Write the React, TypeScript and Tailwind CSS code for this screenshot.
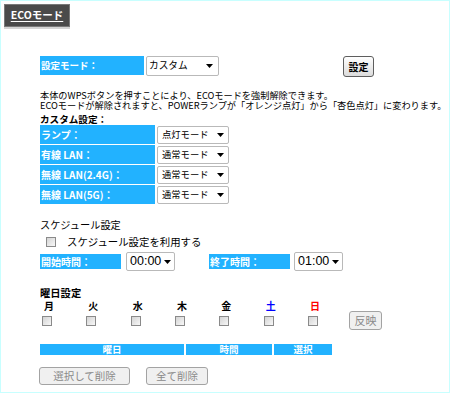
import React from "react";

const Arrow = ({ w = 7 }: { w?: number }) => (
  <svg width={w} height={4} viewBox="0 0 7 4" className="shrink-0">
    <path d="M0 0H7L3.5 4Z" fill="#000" />
  </svg>
);

function Select({
  className,
  text,
  textClass,
}: {
  className: string;
  text: string;
  textClass: string;
}) {
  return (
    <div
      className={`flex items-center justify-between bg-white border border-[#b9b9b9] rounded-[2px] ${className}`}
    >
      <span className={`whitespace-nowrap ${textClass}`}>{text}</span>
      <Arrow />
    </div>
  );
}

const Check = () => (
  <div className="w-[10px] h-[10px] border border-[#8a8a8a] bg-linear-to-br from-[#d4d4d4] to-[#f8f8f8] shrink-0" />
);

const days: { d: string; c: string; w: string }[] = [
  { d: "月", c: "text-black", w: "w-[44.33px]" },
  { d: "火", c: "text-black", w: "w-[44.33px]" },
  { d: "水", c: "text-black", w: "w-[44.33px]" },
  { d: "木", c: "text-black", w: "w-[44.33px]" },
  { d: "金", c: "text-black", w: "w-[44.33px]" },
  { d: "土", c: "text-[#0000ff]", w: "w-[44.33px]" },
  { d: "日", c: "text-[#ff0000]", w: "w-[41px]" },
];

const rows = ["ランプ：", "有線 LAN：", "無線 LAN(2.4G)：", "無線 LAN(5G)："];
const rowVals = ["点灯モード", "通常モード", "通常モード", "通常モード"];

export default function App() {
  return (
    <div className="w-[450px] h-[393px] border border-[#c8ffff] bg-white text-black overflow-hidden font-['Noto_Sans_CJK_JP','Noto_Sans',sans-serif]">
      {/* Header tab */}
      <div className="ml-[3px] mt-[3px] w-[66px]">
        <div className="h-[23px] bg-[#4a4a4a] border border-[#787878] flex items-center justify-center">
          <span className="text-white font-bold text-[10.5px] leading-none underline underline-offset-2">
            ECOモード
          </span>
        </div>
        <div className="h-[2px] bg-[#d4d4d4]" />
      </div>

      <div className="pl-[39px]">
        {/* mode row */}
        <div className="mt-[27px] flex items-start">
          <div className="w-[104px] h-[19px] bg-[#22b2ff] text-white font-bold text-[9.5px] leading-[19px] pl-[1px] whitespace-nowrap">
            設定モード：
          </div>
          <Select
            className="ml-[2px] w-[73px] h-[20px] pl-[2px] pr-[5px]"
            text="カスタム"
            textClass="text-[9.7px] leading-none"
          />
          <div className="ml-[124px] w-[31px] h-[21px] border border-[#5e5e5e] rounded-[3px] bg-linear-to-b from-[#ffffff] to-[#dcdcdc] flex items-center justify-center text-[10px] font-bold leading-none">
            設定
          </div>
        </div>

        {/* description */}
        <div className="mt-[13px] text-[9.2px] leading-[10px] whitespace-nowrap">
          <div>本体のWPSボタンを押すことにより、ECOモードを強制解除できます。</div>
          <div>ECOモードが解除されますと、POWERランプが「オレンジ点灯」から「杏色点灯」に変わります。</div>
        </div>
        <div className="mt-[4px] text-[9.6px] leading-[10px] font-bold">カスタム設定：</div>

        {/* custom rows */}
        <div className="mt-[1px] flex flex-col gap-[1px]">
          {rows.map((r, i) => (
            <div key={r} className="flex items-center h-[19px]">
              <div className="w-[115px] h-[19px] bg-[#22b2ff] text-white font-bold text-[10px] leading-[19px] pl-[1px] whitespace-nowrap">
                {r}
              </div>
              <Select
                className="ml-[2px] w-[72px] h-[18px] pl-[4px] pr-[4px]"
                text={rowVals[i]}
                textClass="text-[9.3px] leading-none"
              />
            </div>
          ))}
        </div>

        {/* schedule */}
        <div className="mt-[15px] text-[10.2px] leading-[11px]">スケジュール設定</div>
        <div className="mt-[6px] h-[12px] flex items-center pl-[6px]">
          <Check />
          <span className="ml-[11px] text-[10.4px] leading-none">スケジュール設定を利用する</span>
        </div>

        <div className="mt-[4px] h-[19px] flex items-center">
          <div className="w-[81px] h-[15px] bg-[#22b2ff] text-white font-bold text-[10px] leading-[15px] pl-[1px] whitespace-nowrap">
            開始時間：
          </div>
          <Select
            className="ml-[5px] w-[49px] h-[19px] pl-[3px] pr-[3px]"
            text="00:00"
            textClass="text-[12.5px] leading-none font-['Liberation_Sans',Arial,sans-serif]"
          />
          <div className="ml-[34px] w-[81px] h-[15px] bg-[#22b2ff] text-white font-bold text-[10px] leading-[15px] pl-[1px] whitespace-nowrap">
            終了時間：
          </div>
          <Select
            className="ml-[4px] w-[49px] h-[19px] pl-[3px] pr-[3px]"
            text="01:00"
            textClass="text-[12.5px] leading-none font-['Liberation_Sans',Arial,sans-serif]"
          />
        </div>

        {/* days */}
        <div className="mt-[16px] text-[10.3px] leading-[11px] font-bold">曜日設定</div>
        <div className="mt-[3px] flex items-start">
          {days.map((d) => (
            <div key={d.d} className={`${d.w} pl-[2px] flex flex-col`}>
              <div className={`h-[10px] text-[10px] leading-[10px] font-bold pl-[2px] ${d.c}`}>{d.d}</div>
              <div className="mt-[5px]">
                <Check />
              </div>
            </div>
          ))}
          <div className="ml-[2px] mt-[10px] w-[33px] h-[19px] border border-[#a3a3a3] rounded-[3px] bg-[#f0f0f0] flex items-center justify-center text-[11px] leading-none text-[#8a8a8a]">
            反映
          </div>
        </div>

        {/* table header */}
        <div className="mt-[14px] flex gap-[2px] h-[11px] text-white font-bold text-[9.5px] leading-[11px]">
          <div className="w-[144px] bg-[#22b2ff] text-center">曜日</div>
          <div className="w-[86px] bg-[#22b2ff] text-center">時間</div>
          <div className="w-[58px] bg-[#22b2ff] text-center">選択</div>
        </div>

        {/* buttons */}
        <div className="mt-[12px] -ml-[1px] flex gap-[16px]">
          <div className="w-[91px] h-[18px] border border-[#a3a3a3] rounded-[3px] bg-[#f0f0f0] flex items-center justify-center text-[10.5px] leading-none text-[#8a8a8a]">
            選択して削除
          </div>
          <div className="w-[62px] h-[18px] border border-[#a3a3a3] rounded-[3px] bg-[#f0f0f0] flex items-center justify-center text-[10.5px] leading-none text-[#8a8a8a]">
            全て削除
          </div>
        </div>
      </div>
    </div>
  );
}
